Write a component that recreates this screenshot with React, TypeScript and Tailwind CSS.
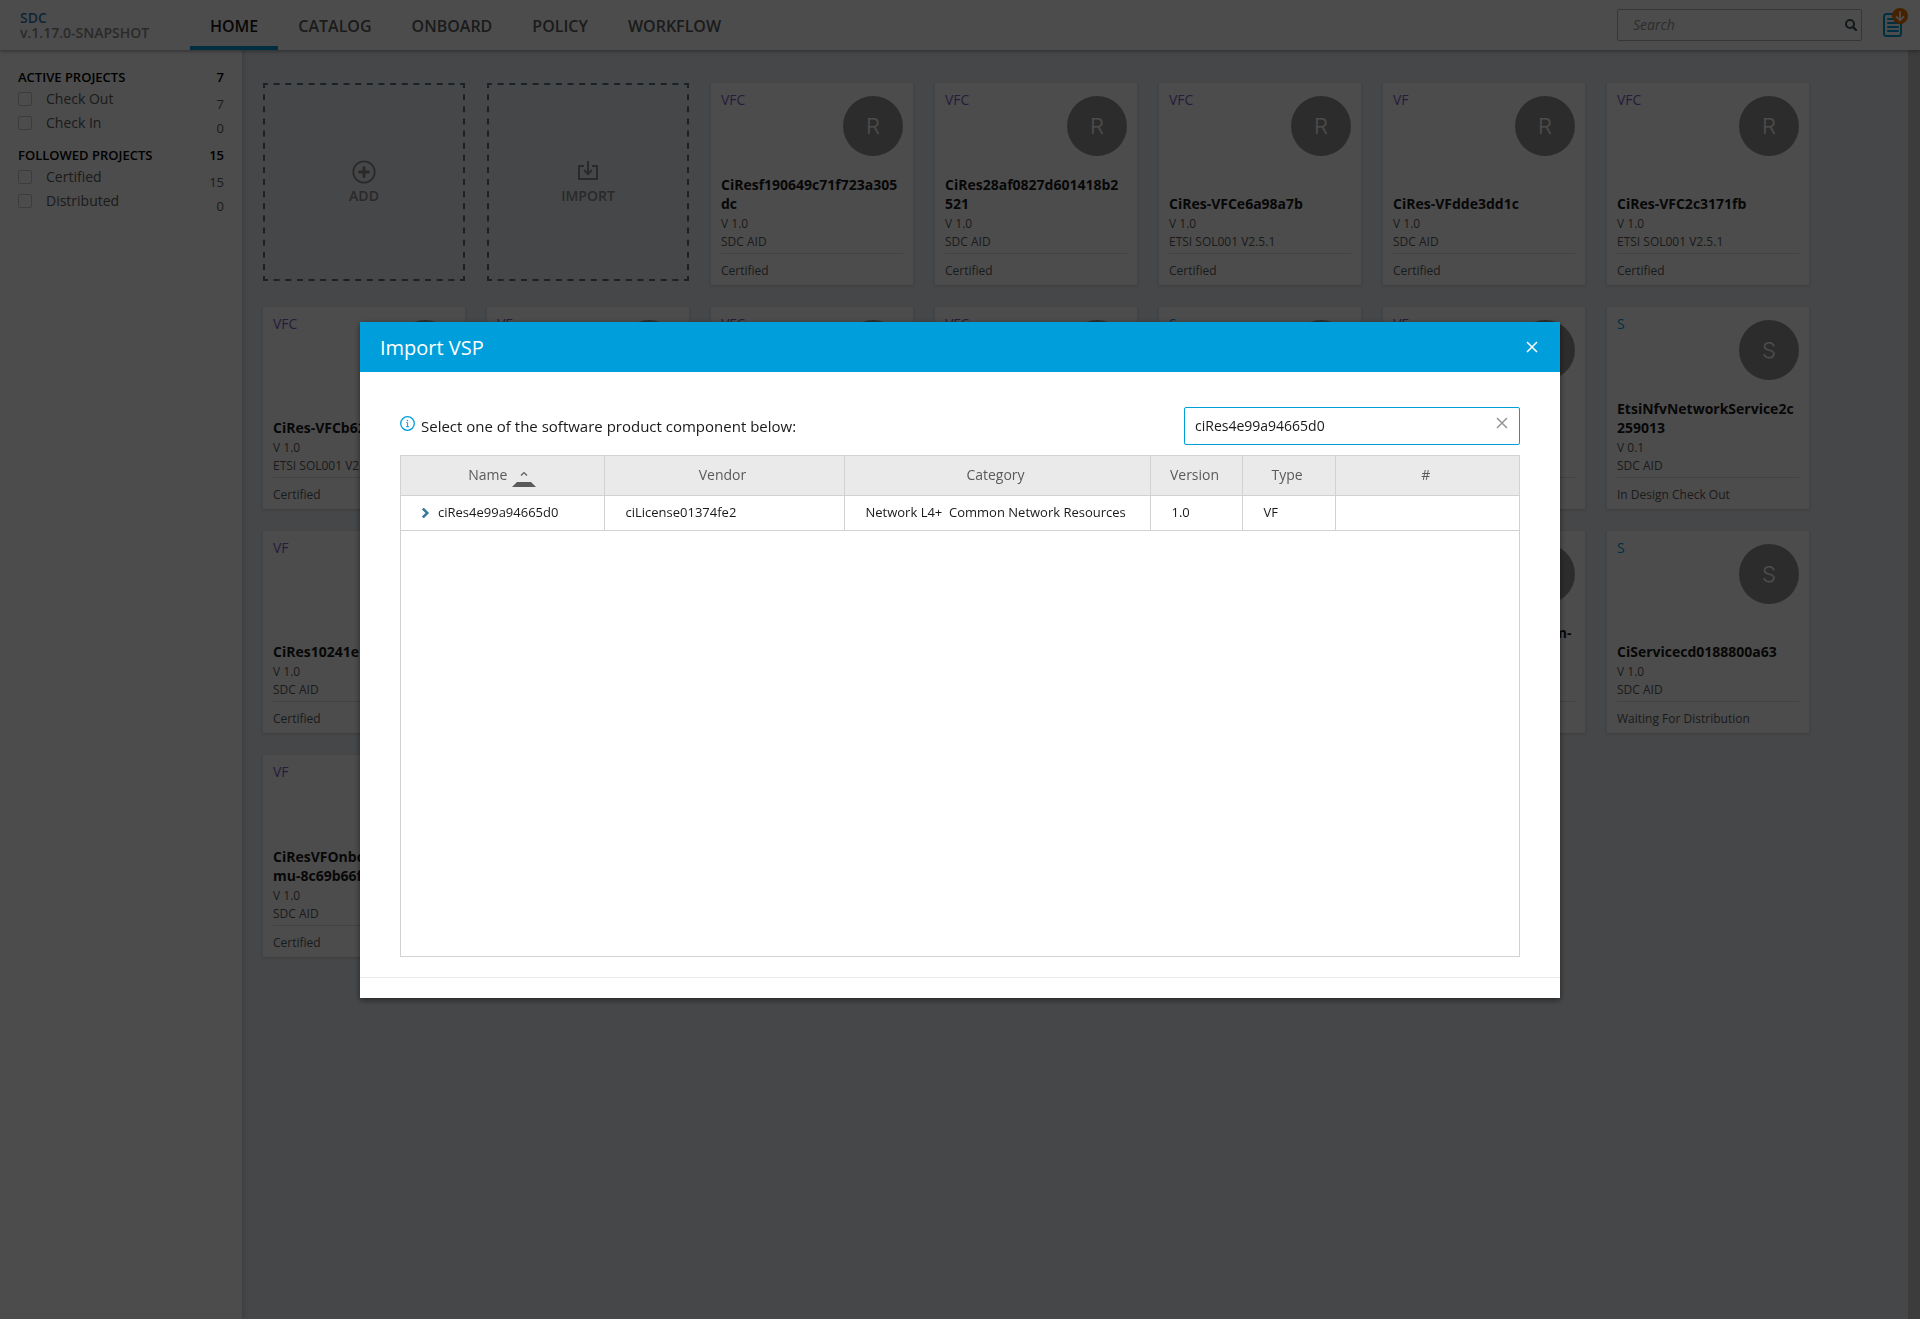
import React, { useState } from 'react';

interface Project {
  type: 'VF' | 'VFC' | 'S';
  name: string;
  version: string;
  vendor: string;
  status: string;
}

const navItems = ['HOME', 'CATALOG', 'ONBOARD', 'POLICY', 'WORKFLOW'];

const filterGroups = [
  {
    title: 'ACTIVE PROJECTS',
    count: 7,
    items: [
      { label: 'Check Out', count: 7 },
      { label: 'Check In', count: 0 },
    ],
  },
  {
    title: 'FOLLOWED PROJECTS',
    count: 15,
    items: [
      { label: 'Certified', count: 15 },
      { label: 'Distributed', count: 0 },
    ],
  },
];

const AID = 'SDC AID';
const ETSI = 'ETSI SOL001 V2.5.1';

const projects: Project[] = [
  { type: 'VFC', name: 'CiResf190649c71f723a305dc', version: '1.0', vendor: AID, status: 'Certified' },
  { type: 'VFC', name: 'CiRes28af0827d601418b2521', version: '1.0', vendor: AID, status: 'Certified' },
  { type: 'VFC', name: 'CiRes-VFCe6a98a7b', version: '1.0', vendor: ETSI, status: 'Certified' },
  { type: 'VF', name: 'CiRes-VFdde3dd1c', version: '1.0', vendor: AID, status: 'Certified' },
  { type: 'VFC', name: 'CiRes-VFC2c3171fb', version: '1.0', vendor: ETSI, status: 'Certified' },
  { type: 'VFC', name: 'CiRes-VFCb62', version: '1.0', vendor: ETSI, status: 'Certified' },
  { type: 'VF', name: 'CiRes-VF', version: '1.0', vendor: AID, status: 'Certified' },
  { type: 'VFC', name: 'CiRes-VFC', version: '1.0', vendor: AID, status: 'Certified' },
  { type: 'VFC', name: 'CiRes-VFC', version: '1.0', vendor: AID, status: 'Certified' },
  { type: 'S', name: 'CiService', version: '0.1', vendor: AID, status: 'Certified' },
  { type: 'VF', name: 'CiRes', version: '1.0', vendor: AID, status: 'Certified' },
  { type: 'S', name: 'EtsiNfvNetworkService2c259013', version: '0.1', vendor: AID, status: 'In Design Check Out' },
  { type: 'VF', name: 'CiRes10241e', version: '1.0', vendor: AID, status: 'Certified' },
  { type: 'VF', name: 'CiRes', version: '1.0', vendor: AID, status: 'Certified' },
  { type: 'VF', name: 'CiRes', version: '1.0', vendor: AID, status: 'Certified' },
  { type: 'VF', name: 'CiRes', version: '1.0', vendor: AID, status: 'Certified' },
  { type: 'VF', name: 'CiRes', version: '1.0', vendor: AID, status: 'Certified' },
  { type: 'VF', name: 'CiResVFOnboarded-acsm- mu-', version: '1.0', vendor: AID, status: 'Certified' },
  { type: 'S', name: 'CiServicecd0188800a63', version: '1.0', vendor: AID, status: 'Waiting For Distribution' },
  { type: 'VF', name: 'CiResVFOnboarded-acsm- mu-8c69b66f', version: '1.0', vendor: AID, status: 'Certified' },
];

const columns = [
  { label: 'Name', width: 'w-[203px]' },
  { label: 'Vendor', width: 'w-[240px]' },
  { label: 'Category', width: 'w-[306px]' },
  { label: 'Version', width: 'w-[92px]' },
  { label: 'Type', width: 'w-[93px]' },
  { label: '#', width: '' },
];

const SearchIcon: React.FC = () => (
  <svg className="w-3 h-3" viewBox="0 0 12 12" fill="none" stroke="#40505a" aria-hidden="true">
    <circle cx="5" cy="5" r="4" strokeWidth="2" />
    <path d="M8 8l3 3" strokeWidth="2.4" strokeLinecap="round" />
  </svg>
);

const NotificationsIcon: React.FC = () => (
  <svg className="w-[26px] h-[30px]" viewBox="0 0 26 30" fill="none" aria-hidden="true">
    <rect x="1" y="6" width="17" height="22" rx="2.5" stroke="#009fdb" strokeWidth="2" />
    <path d="M5 11h9M5 15h10M5 19h10M5 23h10" stroke="#009fdb" strokeWidth="2" strokeLinecap="round" />
    <circle cx="17" cy="8" r="8" fill="#ea7400" />
    <path d="M17 4v8M13.500 8.800L17 12.300l3.500-3.500" stroke="#fff" strokeWidth="1.800" strokeLinecap="round" strokeLinejoin="round" />
  </svg>
);

const AddIcon: React.FC = () => (
  <svg className="w-6 h-6" viewBox="0 0 24 24" fill="none" stroke="currentColor" aria-hidden="true">
    <circle cx="12" cy="12" r="10.700" strokeWidth="1.800" />
    <path d="M12 7.500v9M7.500 12h9" strokeWidth="3" strokeLinecap="round" />
  </svg>
);

const ImportIcon: React.FC = () => (
  <svg className="w-6 h-6" viewBox="0 0 24 24" fill="none" stroke="currentColor" strokeWidth="2" aria-hidden="true">
    <path d="M8 6H3v13h18V6h-5" />
    <path d="M12 1v12M8 10l4 4 4-4" />
  </svg>
);

const InfoIcon: React.FC = () => (
  <svg className="w-[15px] h-[15px]" viewBox="0 0 15 15" fill="none" stroke="#009fdb" aria-hidden="true">
    <circle cx="7.500" cy="7.500" r="6.800" strokeWidth="1.300" />
    <path d="M6.300 6.500h1.300v4.200M6.100 10.700h3" strokeWidth="1" />
    <circle cx="7.400" cy="4.500" r="0.800" fill="#009fdb" stroke="none" />
  </svg>
);

const CrossIcon: React.FC<{ className?: string }> = ({ className = '' }) => (
  <svg className={`w-3 h-3 ${className}`} viewBox="0 0 12 12" fill="none" stroke="currentColor" aria-hidden="true">
    <path d="M1 1l10 10M11 1L1 11" />
  </svg>
);

const SortIcon: React.FC = () => (
  <svg className="w-6 h-4" viewBox="0 0 24 16" aria-hidden="true">
    <path d="M9 4.500L12 1.500l3 3" fill="none" stroke="#5a5a5a" strokeWidth="1.200" />
    <path d="M5 11h14l5 5H0z" fill="#5a5a5a" />
  </svg>
);

// dashed outline with even gaps and closed corners
const DashedFrame: React.FC = () => (
  <svg
    className="absolute inset-0 h-full w-full"
    viewBox="0 0 202 198"
    fill="none"
    stroke="#5a7080"
    strokeWidth="2"
    aria-hidden="true"
  >
    <path d="M2 1h198M2 197h198" strokeDasharray="6 5.647" strokeDashoffset="3" />
    <path d="M1 2v194M201 2v194" strokeDasharray="6 6.125" strokeDashoffset="3" />
    <path d="M1 5V1h4M197 1h4v4M201 193v4h-4M5 197H1v-4" />
  </svg>
);

const TopBar: React.FC = () => (
  <header className="relative z-10 flex h-[50px] items-center bg-white pl-5 pr-[11px] shadow-[0_1px_4px_rgba(0,0,0,0.4)]">
    <div className="w-[170px] text-sm leading-[15px] font-semibold text-[#8c8c8c]">
      <a href="#home" className="block text-[#337ab7]">SDC</a>
      <span>v.1.17.0-SNAPSHOT</span>
    </div>
    <nav className="flex h-full">
      {navItems.map((item) => (
        <a
          key={item}
          href={`#${item.toLowerCase()}`}
          className={`flex items-center border-b-4 px-5 pt-[6px] text-base font-semibold ${
            item === 'HOME' ? 'border-[#009fdb] text-[#191919]' : 'border-transparent text-[#5a5a5a]'
          }`}
        >
          {item}
        </a>
      ))}
    </nav>
    <div className="ml-auto flex items-center">
      <div className="flex h-8 w-[245px] items-center rounded-xs border border-[#b4b4b4] pl-[15px] pr-1">
        <input
          type="text"
          aria-label="Search"
          placeholder="Search"
          className="min-w-0 flex-1 text-sm italic outline-none placeholder:text-[#959595]"
        />
        <button type="button" aria-label="Run search">
          <SearchIcon />
        </button>
      </div>
      <button type="button" aria-label="Notifications" className="ml-[21px] pb-1">
        <NotificationsIcon />
      </button>
    </div>
  </header>
);

const Sidebar: React.FC = () => (
  <aside className="w-[242px] shrink-0 bg-white pl-[18px] pr-[18px] pt-[19px] shadow-[2px_0_4px_rgba(0,0,0,0.12)]">
    {filterGroups.map((group) => (
      <section key={group.title} className="mb-3">
        <h2 className="flex h-[18px] items-center justify-between text-[13px] font-semibold text-black">
          <span>{group.title}</span>
          <span>{group.count}</span>
        </h2>
        {group.items.map((item) => (
          <label key={item.label} className="flex h-6 items-center text-sm text-[#5a5a5a]">
            <input
              type="checkbox"
              className="mr-[14px] h-[14px] w-[14px] appearance-none rounded-xs border border-[#c8c8c8]"
            />
            <span>{item.label}</span>
            <span className="ml-auto pt-[10px] text-[13px]">{item.count}</span>
          </label>
        ))}
      </section>
    ))}
  </aside>
);

const ActionTile: React.FC<{ label: string; children: React.ReactNode }> = ({ label, children }) => (
  <button
    type="button"
    className="relative flex h-[198px] w-[202px] flex-col items-center justify-center pt-[2px] text-sm font-semibold text-[#8c8c8c]"
  >
    <DashedFrame />
    {children}
    <span className="mt-[2px] leading-5">{label}</span>
  </button>
);

const ProjectCard: React.FC<{ project: Project }> = ({ project }) => (
  <article className="flex h-[202px] w-[202px] flex-col bg-white px-[10px] shadow-[0_1px_3px_rgba(0,0,0,0.15)]">
    <div className="flex justify-between">
      <span className={`pt-[7px] text-sm ${project.type === 'S' ? 'text-[#009fdb]' : 'text-[#8b5cc4]'}`}>
        {project.type}
      </span>
      <span className="mt-[13px] flex h-[60px] w-[60px] items-center justify-center rounded-full bg-[#959595] font-[Inter,sans-serif] text-[22px] font-light text-white">
        {project.type === 'S' ? 'S' : 'R'}
      </span>
    </div>
    <h3 className="mt-auto pr-[3px] text-sm leading-[19px] font-bold break-words text-[#191919]">{project.name}</h3>
    <p className="pt-[2px] text-xs leading-[18px] text-[#5a5a5a]">V {project.version}</p>
    <p className="text-xs leading-[18px] text-[#5a5a5a]">{project.vendor}</p>
    <p className="mt-[2px] h-8 border-t border-[#dcdcdc] pt-px text-xs leading-8 text-[#5a5a5a]">{project.status}</p>
  </article>
);

const ImportModal: React.FC = () => {
  const [filter, setFilter] = useState('ciRes4e99a94665d0');

  return (
    <div className="fixed inset-0 z-20 flex items-center justify-center bg-black/70">
      <div
        role="dialog"
        aria-modal="true"
        aria-labelledby="modal-title"
        className="w-full max-w-[1200px] bg-white shadow-[0_2px_6px_rgba(0,0,0,0.5)]"
      >
        <div className="flex h-[50px] items-center justify-between bg-[#009fdb] pl-5 pr-[22px] text-white">
          <h2 id="modal-title" className="pt-[2px] text-xl">Import VSP</h2>
          <button type="button" aria-label="Close">
            <CrossIcon className="stroke-[1.500]" />
          </button>
        </div>

        <div className="px-10 pt-[35px] pb-5">
          <div className="flex items-center justify-between">
            <label htmlFor="vsp-filter" className="flex items-start text-[15px] leading-[22px] text-[#191919]">
              <span className="mr-[6px] pt-px">
                <InfoIcon />
              </span>
              <span>Select one of the software product component below:</span>
            </label>
            <div className="flex h-[38px] w-[336px] items-center rounded-xs border border-[#009fdb] pl-[10px] pr-[11px]">
              <input
                id="vsp-filter"
                type="text"
                value={filter}
                onChange={(e) => setFilter(e.target.value)}
                className="min-w-0 flex-1 text-sm text-[#191919] outline-none"
              />
              <button type="button" aria-label="Clear" className="pb-[6px] text-[#959595]" onClick={() => setFilter('')}>
                <CrossIcon className="stroke-[1.500]" />
              </button>
            </div>
          </div>

          <div className="mt-[10px] h-[502px] border border-[#d2d2d2]">
            <table className="w-full table-fixed border-collapse">
              <thead>
                <tr className="h-10 border-b border-[#d2d2d2] bg-[#eaeaea] text-sm text-[#5a5a5a]">
                  {columns.map((column) => (
                    <th
                      key={column.label}
                      className={`border-r border-[#d2d2d2] py-0 pl-0 font-medium last:border-r-0 ${
                        column.label === 'Name' ? 'pr-0' : 'pr-[3px]'
                      } ${column.width}`}
                    >
                      <span className="flex items-center justify-center">
                        {column.label}
                        {column.label === 'Name' && (
                          <span className="ml-[5px] pt-2">
                            <SortIcon />
                          </span>
                        )}
                      </span>
                    </th>
                  ))}
                </tr>
              </thead>
              <tbody>
                <tr className="h-[35px] border-b border-[#d2d2d2] text-[13px] text-[#191919] [&>td]:border-r [&>td]:border-[#d2d2d2] [&>td]:py-0 [&>td]:pr-0 [&>td]:pl-[21px] [&>td:last-child]:border-r-0">
                  <td>
                    <span className="flex items-center">
                      <button type="button" aria-label="Expand" className="mr-2">
                        <svg className="h-[10px] w-2" viewBox="0 0 8 10" fill="none" stroke="#3a7999" strokeWidth="2.500" aria-hidden="true">
                          <path d="M0.800 0.500L5.300 5l-4.500 4.500" />
                        </svg>
                      </button>
                      ciRes4e99a94665d0
                    </span>
                  </td>
                  <td>ciLicense01374fe2</td>
                  <td className="whitespace-pre">{'Network L4+  Common Network Resources'}</td>
                  <td>1.0</td>
                  <td>VF</td>
                  <td />
                </tr>
              </tbody>
            </table>
          </div>
        </div>
        <div className="h-[21px] border-t border-[#eaeaea]" />
      </div>
    </div>
  );
};

export default function App() {
  return (
    <div className="flex min-h-screen flex-col bg-[#eaedf1] font-['Open_Sans',sans-serif]">
      <TopBar />
      <div className="flex flex-1">
        <Sidebar />
        <main className="flex flex-1 flex-wrap content-start gap-[22px] pl-[21px] pt-[33px]">
          <ActionTile label="ADD">
            <AddIcon />
          </ActionTile>
          <ActionTile label="IMPORT">
            <ImportIcon />
          </ActionTile>
          {projects.map((project, i) => (
            <ProjectCard key={i} project={project} />
          ))}
        </main>
        <div className="w-3 shrink-0 bg-[#c8c8c8]" />
      </div>
      <ImportModal />
    </div>
  );
}
